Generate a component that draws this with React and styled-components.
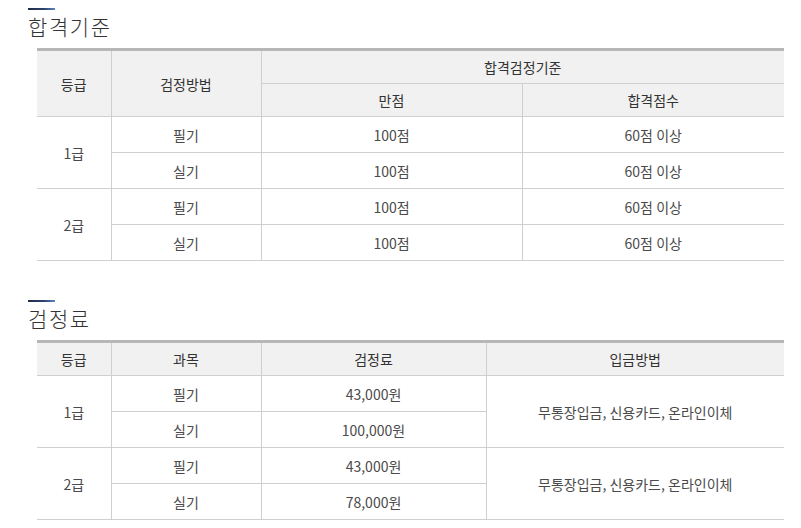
import styled, { createGlobalStyle } from "styled-components";

const GlobalStyle = createGlobalStyle`
  body {
    margin: 0;
    background: #fff;
    font-family: "Noto Sans CJK KR", "Noto Sans", sans-serif;
  }
`;

const Page = styled.div`
  width: 801px;
  padding: 8px 17px 0 28px;
  box-sizing: border-box;
`;

const Section = styled.section`
  margin-bottom: ${({ $gap }) => $gap || 0}px;
`;

const Title = styled.h2`
  margin: 0;
  font-size: 21px;
  font-weight: 300;
  line-height: 32px;
  letter-spacing: 1.6px;
  color: #333;

  &::before {
    content: "";
    display: block;
    width: 27px;
    height: 2px;
    background: linear-gradient(to right, #1f2b48, #2f4470 60%, #5b86c5);
  }
`;

const Table = styled.table`
  margin: 6px 0 0 9px;
  width: 747px;
  border-collapse: collapse;
  table-layout: fixed;
  border-top: 3px solid #b7b7b7;
  font-size: 14px;
  color: #4a4a4a;
  text-align: center;
`;

const Th = styled.th`
  height: 32px;
  padding: 0;
  background: #f1f1f1;
  font-weight: 400;
  color: #333;
  border: 1px solid #cfcfcf;
  border-top: none;

  &:first-child {
    border-left: none;
  }
  &:last-child {
    border-right: none;
  }
`;

const Td = styled.td`
  height: 35px;
  padding: 0;
  border: 1px solid #cfcfcf;

  &:first-child {
    border-left: none;
  }
  &:last-child {
    border-right: none;
  }
`;

const passRows = [
  { grade: "1급", items: [["필기", "100점", "60점 이상"], ["실기", "100점", "60점 이상"]] },
  { grade: "2급", items: [["필기", "100점", "60점 이상"], ["실기", "100점", "60점 이상"]] },
];

const feeRows = [
  { grade: "1급", items: [["필기", "43,000원"], ["실기", "100,000원"]] },
  { grade: "2급", items: [["필기", "43,000원"], ["실기", "78,000원"]] },
];

const payMethod = "무통장입금, 신용카드, 온라인이체";

export default function App() {
  return (
    <>
      <GlobalStyle />
      <Page>
        <Section $gap={39}>
          <Title>합격기준</Title>
          <Table>
            <colgroup>
              <col style={{ width: 74 }} />
              <col style={{ width: 150 }} />
              <col style={{ width: 261 }} />
              <col />
            </colgroup>
            <thead>
              <tr>
                <Th rowSpan={2}>등급</Th>
                <Th rowSpan={2}>검정방법</Th>
                <Th colSpan={2}>합격검정기준</Th>
              </tr>
              <tr>
                <Th>만점</Th>
                <Th>합격점수</Th>
              </tr>
            </thead>
            <tbody>
              {passRows.map((g) =>
                g.items.map((it, i) => (
                  <tr key={g.grade + i}>
                    {i === 0 && <Td rowSpan={g.items.length}>{g.grade}</Td>}
                    <Td>{it[0]}</Td>
                    <Td>{it[1]}</Td>
                    <Td>{it[2]}</Td>
                  </tr>
                ))
              )}
            </tbody>
          </Table>
        </Section>

        <Section>
          <Title>검정료</Title>
          <Table>
            <colgroup>
              <col style={{ width: 74 }} />
              <col style={{ width: 150 }} />
              <col style={{ width: 225 }} />
              <col />
            </colgroup>
            <thead>
              <tr>
                <Th>등급</Th>
                <Th>과목</Th>
                <Th>검정료</Th>
                <Th>입금방법</Th>
              </tr>
            </thead>
            <tbody>
              {feeRows.map((g) =>
                g.items.map((it, i) => (
                  <tr key={g.grade + i}>
                    {i === 0 && <Td rowSpan={g.items.length}>{g.grade}</Td>}
                    <Td>{it[0]}</Td>
                    <Td>{it[1]}</Td>
                    {i === 0 && <Td rowSpan={g.items.length}>{payMethod}</Td>}
                  </tr>
                ))
              )}
            </tbody>
          </Table>
        </Section>
      </Page>
    </>
  );
}
